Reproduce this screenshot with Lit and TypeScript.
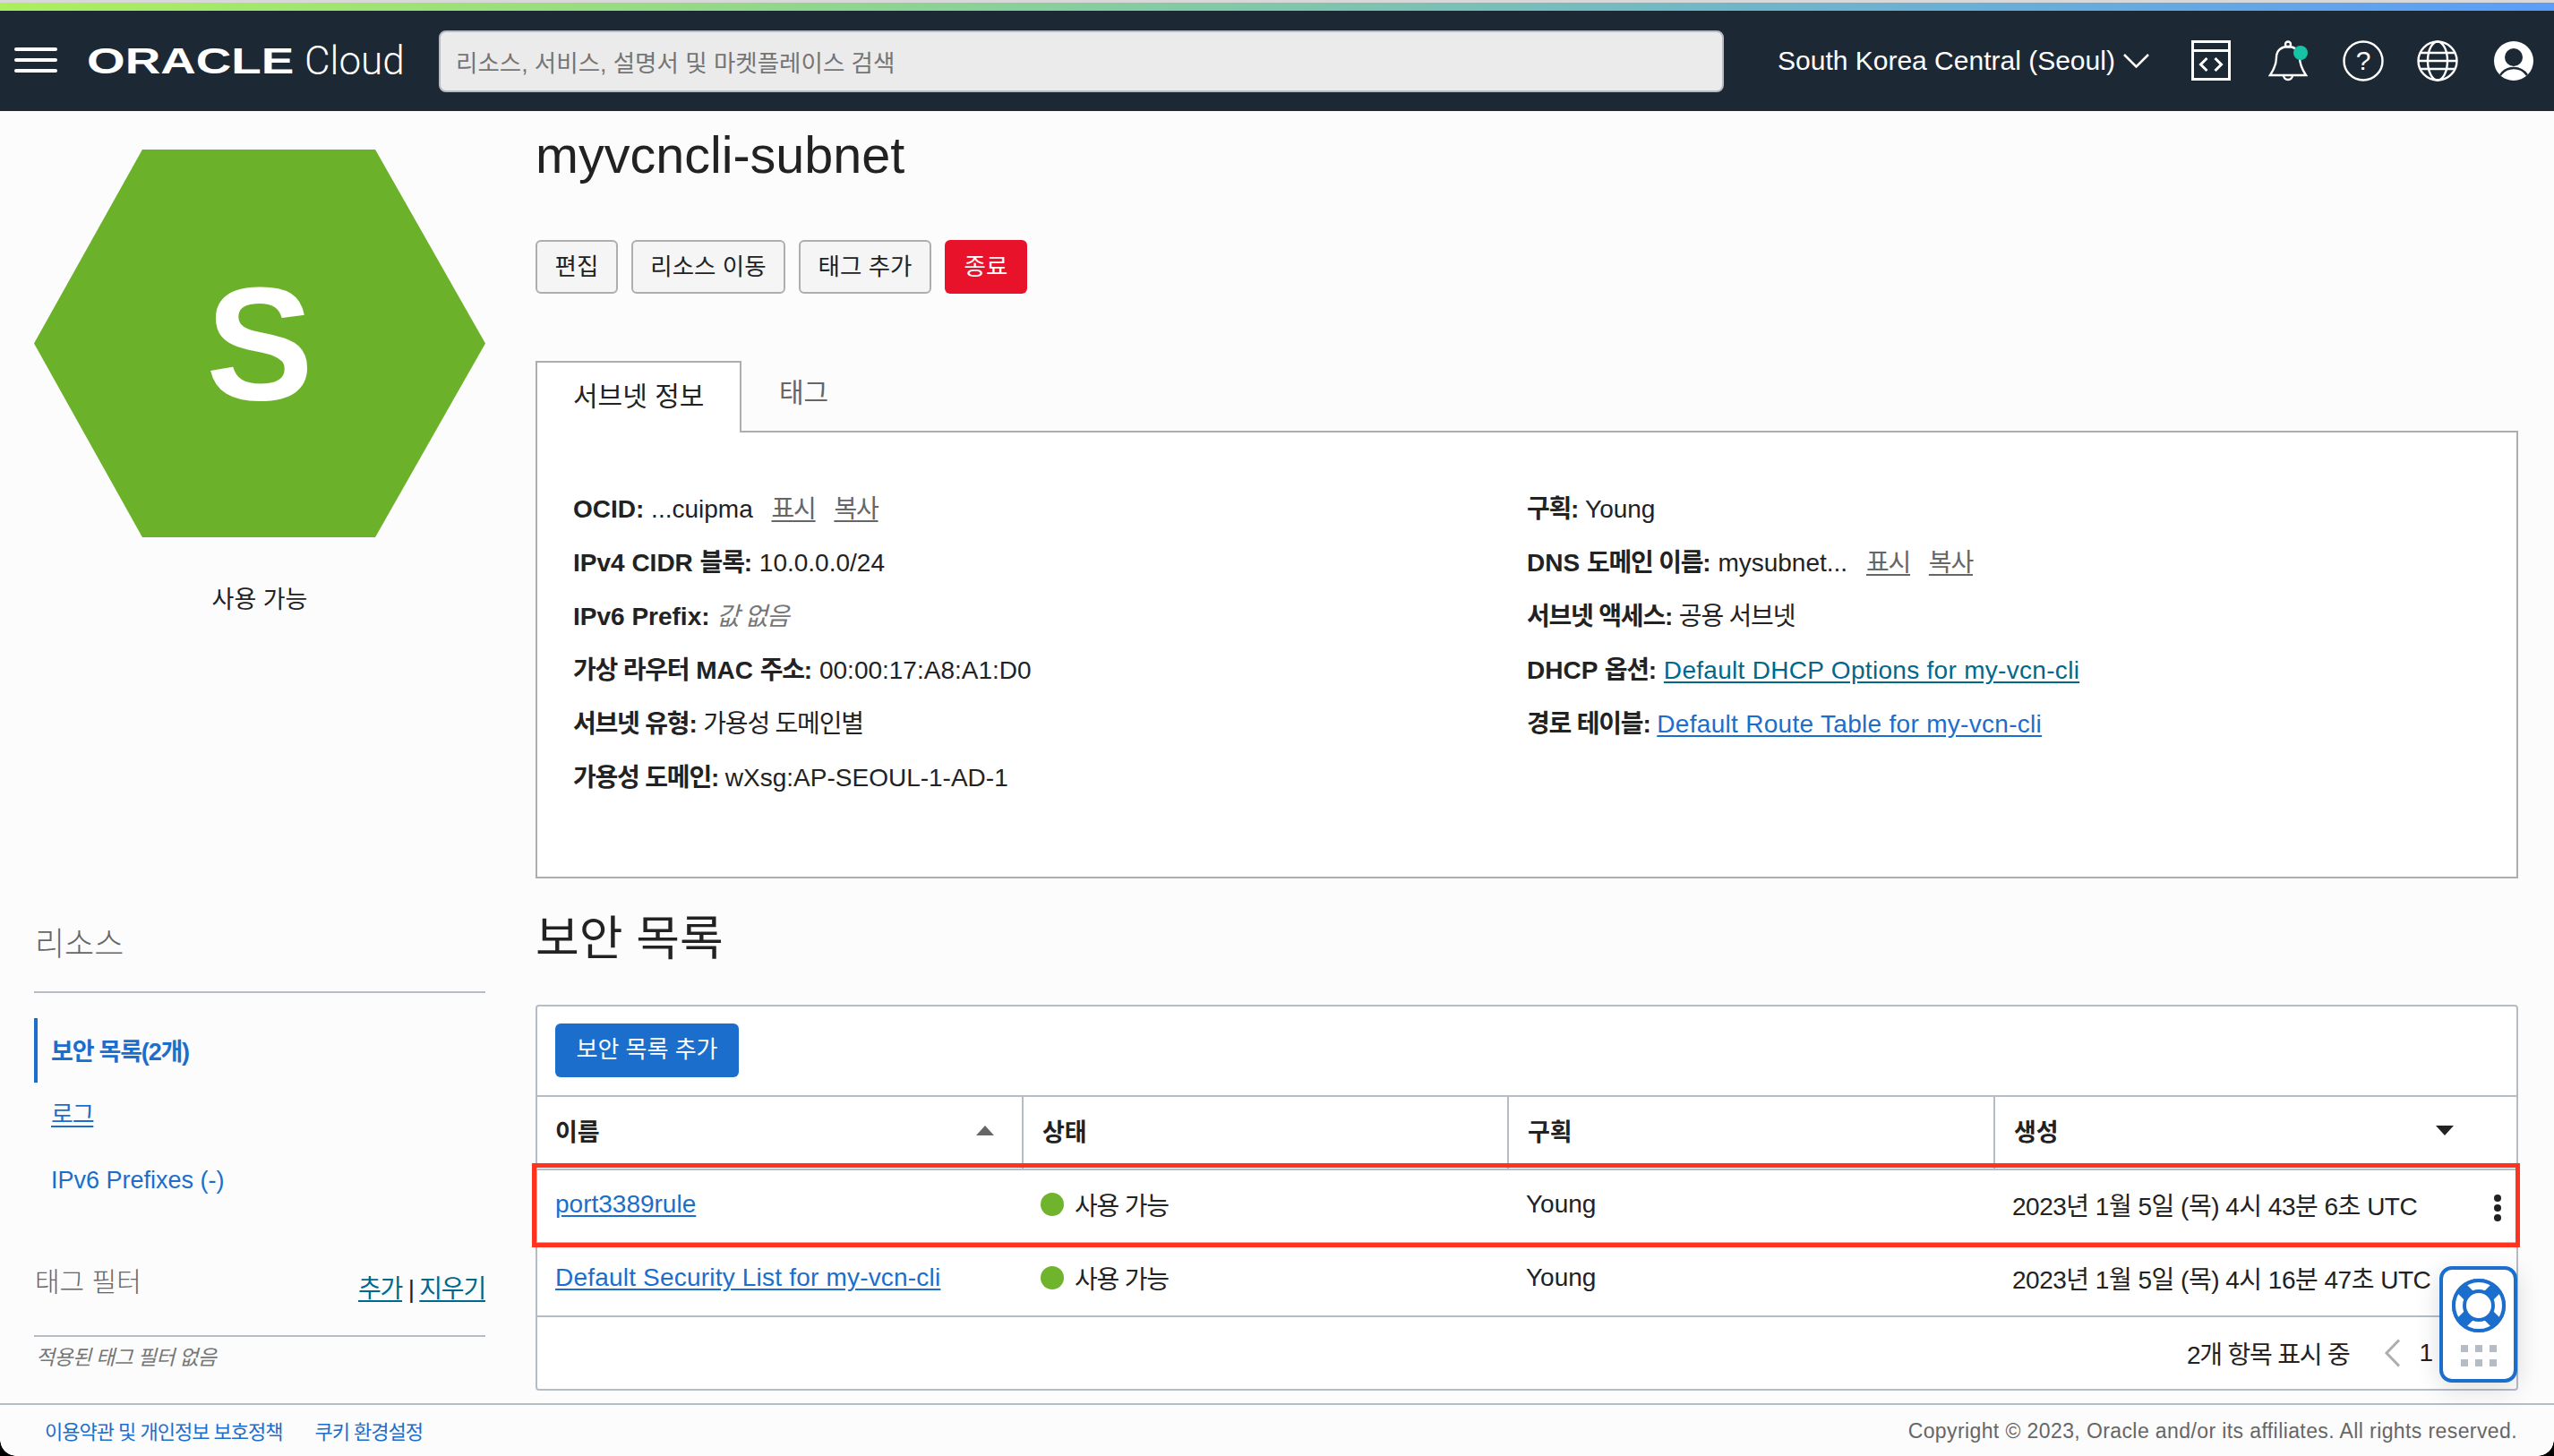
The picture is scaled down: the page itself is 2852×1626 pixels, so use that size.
import { LitElement, html, css, svg } from 'lit';
import { customElement } from 'lit/decorators.js';

const codeIcon = svg`
  <rect x="2.5" y="1.5" width="41" height="42" fill="none" stroke="#fff" stroke-width="3" />
  <line x1="2" y1="11.5" x2="44" y2="11.5" stroke="#fff" stroke-width="3" />
  <path d="M18.5 20l-7 7 7 7M27.5 20l7 7-7 7" fill="none" stroke="#fff" stroke-width="3" />
`;

const bellIcon = svg`
  <g fill="none" stroke="#fff" stroke-width="2.4">
    <circle cx="22" cy="4.5" r="3" />
    <path d="M2 39C8 30 9 24 9 19 9 11 15 7 22 7s13 4 13 12c0 5 1 11 7 20z" />
    <path d="M17 39a5 5 0 0 0 10 0" />
  </g>
  <circle cx="36" cy="14" r="8" fill="#16c3a4" />
`;

const globeIcon = svg`
  <g fill="none" stroke="#fff" stroke-width="2.4">
    <circle cx="23" cy="23" r="21.5" />
    <ellipse cx="23" cy="23" rx="11" ry="21.5" />
    <path d="M3 14h40M1.5 23h43M3 32h40" />
  </g>
`;

const avatarIcon = svg`
  <circle cx="22" cy="22" r="22" fill="#fff" />
  <circle cx="22" cy="18" r="10" fill="#1d2835" />
  <path d="M7 38c4-6 10-8 15-8s11 2 15 8" fill="none" stroke="#1d2835" stroke-width="2.4" />
`;

const buoyIcon = svg`
  <circle cx="30" cy="30" r="30" fill="#1b6ecc" />
  <circle cx="30" cy="30" r="22.5" fill="none" stroke="#fff" stroke-width="9" />
  <path d="M10 10l10 10M50 10L40 20M10 50l10-10M50 50L40 40" stroke="#1b6ecc" stroke-width="14" />
  <circle cx="30" cy="30" r="28" fill="none" stroke="#1b6ecc" stroke-width="4" />
  <circle cx="30" cy="30" r="15.5" fill="#fff" stroke="#1b6ecc" stroke-width="3" />
`;

@customElement('app-root')
export class AppRoot extends LitElement {
  static styles = css`
    :host {
      display: flex;
      flex-direction: column;
      position: relative;
      width: 2852px;
      height: 1626px;
      overflow: hidden;
      background: #fcfcfc;
      color: #222;
      font-family: 'Liberation Sans', 'Noto Sans CJK KR', sans-serif;
      font-size: 28px;
    }
    a {
      color: #1b6ecc;
      text-decoration: underline;
      text-underline-offset: 3px;
    }
    b {
      font-weight: 700;
    }
    /* hangul runs a bit narrower in the original font */
    .ko {
      letter-spacing: -1.2px;
    }

    /* top bar */
    .strip {
      height: 9px;
      border-top: 3px solid #d8d8d8;
      background: linear-gradient(90deg, #acef5c, #88d09a 40%, #70b6c8 68%, #5b9df8);
    }
    .bar {
      display: flex;
      align-items: center;
      height: 112px;
      background: #1d2835;
      color: #fff;
    }
    .burger {
      display: flex;
      flex-direction: column;
      gap: 8px;
      width: 48px;
      margin-left: 16px;
      margin-bottom: 2px;
    }
    .burger i {
      height: 4px;
      border-radius: 2px;
      background: #fff;
    }
    .oracle {
      width: 230px;
      margin-left: 33px;
      font-size: 40px;
      font-weight: 700;
      line-height: 40px;
      transform: scaleX(1.37);
      transform-origin: left center;
      white-space: nowrap;
    }
    .cloud {
      width: 150px;
      margin-left: 13px;
      font-family: Roboto, sans-serif;
      font-size: 44px;
      font-weight: 300;
    }
    .search {
      display: flex;
      align-items: center;
      box-sizing: border-box;
      width: 1435px;
      height: 69px;
      padding-left: 17px;
      border: 2px solid #b6bcc6;
      border-radius: 8px;
      background: #ebebeb;
      color: #757575;
      font-size: 26.5px;
    }
    .region {
      margin-left: 60px;
      font-size: 30px;
      white-space: nowrap;
    }
    .chev {
      margin-left: 9px;
    }
    .bar svg.ic {
      display: block;
      flex: none;
    }
    .code {
      margin-left: 46px;
    }
    .bell {
      margin-left: 41px;
    }
    .help {
      margin-left: 39px;
    }
    .globe {
      margin-left: 37px;
    }
    .avatar {
      margin-left: 40px;
    }

    /* page */
    .body {
      display: flex;
      flex: 1;
      min-height: 0;
    }
    .side {
      box-sizing: border-box;
      width: 504px;
      margin-left: 38px;
    }
    .hex {
      display: flex;
      align-items: center;
      justify-content: center;
      height: 433px;
      margin-top: 43px;
      background: #6cb12a;
      clip-path: polygon(24% 0, 75.6% 0, 100% 50%, 75.6% 100%, 24% 100%, 0 50%);
      color: #fff;
      font-size: 180px;
      font-weight: 700;
    }
    .caption {
      margin-top: 50px;
      margin-bottom: -2px;
      line-height: 40px;
      text-align: center;
      font-size: 27px;
    }
    .side-title {
      margin-top: 342px;
      padding: 0 0 27px 1px;
      border-bottom: 2px solid #b6bcc6;
      color: #666;
      font-size: 36px;
      font-weight: 300;
      line-height: 50px;
    }
    .nav {
      margin-top: 28px;
      font-size: 27px;
    }
    .nav a {
      display: flex;
      align-items: center;
      box-sizing: border-box;
      height: 72px;
      padding-left: 19px;
      padding-bottom: 2px;
    }
    .nav a.on {
      padding-left: 15px;
      border-left: 4px solid #1b6ecc;
      font-weight: 700;
      text-decoration: none;
    }
    .nav a.sub {
      height: 68px;
      margin-bottom: 5px;
    }
    .nav a.plain {
      text-decoration: none;
      padding-bottom: 0;
    }
    .tag-head {
      display: flex;
      justify-content: space-between;
      height: 90px;
      margin-top: 47px;
      border-bottom: 2px solid #b6bcc6;
    }
    .tag-title {
      padding-left: 1px;
      color: #666;
      font-size: 30px;
      font-weight: 300;
      line-height: 62px;
    }
    .tag-links {
      padding-top: 16px;
      line-height: 46px;
      font-size: 28px;
    }
    .tag-links a {
      color: #00688c;
    }
    .no-tags {
      margin-top: 3px;
      padding-left: 2px;
      color: #767676;
      font-size: 23px;
      letter-spacing: -0.7px;
      font-style: italic;
      line-height: 40px;
    }

    .main {
      width: 2214px;
      margin-left: 56px;
    }
    h1 {
      margin: 14px 0 0;
      font-size: 57.5px;
      font-weight: 400;
      line-height: 70px;
    }
    .actions {
      display: flex;
      gap: 15px;
      margin-top: 60px;
    }
    .btn {
      box-sizing: border-box;
      width: 92px;
      height: 60px;
      border: 2px solid #aeaeae;
      border-radius: 6px;
      background: #f5f5f5;
      font-size: 26.5px;
      line-height: 56px;
      text-align: center;
    }
    .btn.move {
      width: 172px;
    }
    .btn.tag {
      width: 148px;
    }
    .btn.danger {
      border: 0;
      background: #e8132b;
      color: #fff;
      line-height: 60px;
    }
    .tabs {
      display: flex;
      height: 78px;
      margin-top: 75px;
      border-bottom: 2px solid #aeaeae;
    }
    .tab {
      box-sizing: border-box;
      width: 230px;
      height: 80px;
      padding-left: 40px;
      border: 2px solid #aeaeae;
      border-bottom: 0;
      background: #fff;
      font-size: 30px;
      line-height: 76px;
    }
    .tab.off {
      width: auto;
      padding-left: 42px;
      border: 0;
      background: none;
      color: #666;
      line-height: 72px;
    }
    .panel {
      display: grid;
      grid-template-columns: 1065px 1fr;
      box-sizing: border-box;
      height: 498px;
      padding: 56px 0 0 40px;
      border: 2px solid #aeaeae;
      border-top: 0;
      background: #fff;
    }
    .info div {
      height: 60px;
      line-height: 60px;
      white-space: nowrap;
    }
    .info a {
      letter-spacing: 0.3px;
    }
    .info a.grey {
      margin-left: 13px;
      color: #666;
      letter-spacing: -1.2px;
    }
    .info a.teal {
      color: #00688c;
    }
    .info em {
      color: #767676;
    }
    h2 {
      margin: 33px 0 0;
      font-size: 53px;
      font-weight: 400;
      line-height: 70px;
    }
    .card {
      position: relative;
      box-sizing: border-box;
      height: 431px;
      margin-top: 38px;
      border: 2px solid #b6bcc6;
      border-radius: 4px;
      background: #fff;
    }
    .toolbar {
      box-sizing: border-box;
      height: 101px;
      padding: 19px 0 0 20px;
      border-bottom: 2px solid #b6bcc6;
    }
    .btn.primary {
      width: 205px;
      border: 0;
      background: #1b6ecc;
      color: #fff;
      font-size: 26px;
      line-height: 58px;
    }
    .row {
      display: grid;
      grid-template-columns: 541px 542px 543px 1fr;
      height: 82px;
      box-sizing: border-box;
      border-bottom: 2px solid #b6bcc6;
    }
    .row > div {
      display: flex;
      align-items: center;
      position: relative;
      padding: 0 0 4px 21px;
      white-space: nowrap;
    }
    .row > div:first-child {
      padding-left: 20px;
    }
    .row.head > div {
      font-weight: 700;
      font-size: 27px;
      padding-bottom: 6px;
    }
    .row.head > div + div {
      border-left: 2px solid #b6bcc6;
    }
    .row .date {
      letter-spacing: -0.5px;
    }
    .row a.long {
      letter-spacing: 0.2px;
    }
    .sort {
      position: absolute;
      width: 0;
      height: 0;
      border-left: 10px solid transparent;
      border-right: 10px solid transparent;
    }
    .sort.up {
      left: 490px;
      border-bottom: 11px solid #666;
    }
    .sort.down {
      left: 492px;
      border-top: 11px solid #222;
    }
    .dot {
      flex: none;
      width: 26px;
      height: 26px;
      margin-right: 12px;
      border-radius: 50%;
      background: #6fb42c;
    }
    .kebab {
      position: absolute;
      left: 559px;
      top: 27px;
      display: flex;
      flex-direction: column;
      gap: 3px;
    }
    .kebab i {
      width: 8px;
      height: 8px;
      border-radius: 50%;
      background: #222;
    }
    .pager {
      display: flex;
      align-items: center;
      height: 80px;
      padding-left: 1842px;
      white-space: nowrap;
    }
    .pager svg {
      margin: 0 20px 0 39px;
    }
    .mark {
      position: absolute;
      left: -6px;
      top: 175px;
      box-sizing: border-box;
      width: 2220px;
      height: 94px;
      border: 5px solid #ff3320;
    }
    .help-tab {
      position: absolute;
      right: -1px;
      bottom: 7px;
      box-sizing: border-box;
      width: 87px;
      height: 130px;
      padding-top: 10px;
      border: 4px solid #1b6ecc;
      border-radius: 14px;
      background: #fff;
      box-shadow: 0 6px 28px rgba(0, 0, 0, 0.14);
    }
    .help-tab svg {
      display: block;
      margin: 0 auto;
    }
    .grip {
      display: grid;
      grid-template-columns: repeat(3, 8px);
      gap: 8px;
      justify-content: center;
      margin-top: 14px;
    }
    .grip i {
      height: 8px;
      background: #b6bcc6;
    }

    /* footer */
    .foot {
      display: flex;
      align-items: center;
      box-sizing: border-box;
      height: 59px;
      padding: 2px 41px 0 50px;
      border-top: 2px solid #b6bcc6;
      font-size: 22px;
    }
    .foot a {
      margin-right: 36px;
      margin-bottom: 3px;
      letter-spacing: -1px;
      text-decoration: none;
    }
    .copy {
      margin-left: auto;
      color: #666;
      font-size: 23px;
      letter-spacing: 0.4px;
    }
    .corner {
      position: absolute;
      bottom: 0;
      width: 18px;
      height: 18px;
    }
    .corner.l {
      left: 0;
      background: radial-gradient(circle at 100% 0, transparent 17.5px, #000 18px);
    }
    .corner.r {
      right: 0;
      background: radial-gradient(circle at 0 0, transparent 17.5px, #000 18px);
    }
  `;

  render() {
    return html`
      <div class="strip"></div>
      <header class="bar">
        <div class="burger"><i></i><i></i><i></i></div>
        <div class="oracle">ORACLE</div>
        <div class="cloud">Cloud</div>
        <div class="search">리소스, 서비스, 설명서 및 마켓플레이스 검색</div>
        <div class="region">South Korea Central (Seoul)</div>
        <svg class="ic chev" width="29" height="16" viewBox="0 0 29 16">
          <path d="M1 1l13.500 13.500L28 1" fill="none" stroke="#fff" stroke-width="2.500" />
        </svg>
        <svg class="ic code" width="46" height="46" viewBox="0 0 46 46">${codeIcon}</svg>
        <svg class="ic bell" width="44" height="46" viewBox="0 0 44 46">${bellIcon}</svg>
        <svg class="ic help" width="46" height="46" viewBox="0 0 46 46">
          <circle cx="23" cy="23" r="21.500" fill="none" stroke="#fff" stroke-width="2.400" />
          <text x="23" y="33" fill="#fff" font-size="30" text-anchor="middle">?</text>
        </svg>
        <svg class="ic globe" width="46" height="46" viewBox="0 0 46 46">${globeIcon}</svg>
        <svg class="ic avatar" width="44" height="44" viewBox="0 0 44 44">${avatarIcon}</svg>
      </header>

      <div class="body">
        <aside class="side">
          <div class="hex">S</div>
          <div class="caption">사용 가능</div>
          <div class="side-title">리소스</div>
          <nav class="nav">
            <a class="on"><span class="ko">보안 목록(2개)</span></a>
            <a class="sub"><span class="ko">로그</span></a>
            <a class="plain">IPv6 Prefixes (-)</a>
          </nav>
          <div class="tag-head">
            <span class="tag-title">태그 필터</span>
            <span class="tag-links ko"><a>추가</a> | <a>지우기</a></span>
          </div>
          <div class="no-tags">적용된 태그 필터 없음</div>
        </aside>

        <main class="main">
          <h1>myvcncli-subnet</h1>
          <div class="actions">
            <div class="btn">편집</div>
            <div class="btn move">리소스 이동</div>
            <div class="btn tag">태그 추가</div>
            <div class="btn danger">종료</div>
          </div>
          <div class="tabs">
            <div class="tab">서브넷 정보</div>
            <div class="tab off">태그</div>
          </div>
          <section class="panel">
            <div class="info">
              <div><b>OCID:</b> ...cuipma <a class="grey">표시</a> <a class="grey">복사</a></div>
              <div><b>IPv4 CIDR <span class="ko">블록</span>:</b> 10.0.0.0/24</div>
              <div><b>IPv6 Prefix:</b> <em class="ko">값 없음</em></div>
              <div><b><span class="ko">가상 라우터</span> MAC <span class="ko">주소</span>:</b> 00:00:17:A8:A1:D0</div>
              <div><b class="ko">서브넷 유형:</b> <span class="ko">가용성 도메인별</span></div>
              <div><b class="ko">가용성 도메인:</b> wXsg:AP-SEOUL-1-AD-1</div>
            </div>
            <div class="info">
              <div><b class="ko">구획:</b> Young</div>
              <div><b>DNS <span class="ko">도메인 이름</span>:</b> mysubnet... <a class="grey">표시</a> <a class="grey">복사</a></div>
              <div><b class="ko">서브넷 액세스:</b> <span class="ko">공용 서브넷</span></div>
              <div><b>DHCP <span class="ko">옵션</span>:</b> <a class="teal">Default DHCP Options for my-vcn-cli</a></div>
              <div><b class="ko">경로 테이블:</b> <a>Default Route Table for my-vcn-cli</a></div>
            </div>
          </section>

          <h2>보안 목록</h2>
          <section class="card">
            <div class="toolbar"><div class="btn primary">보안 목록 추가</div></div>
            <div class="row head">
              <div>이름<span class="sort up"></span></div>
              <div>상태</div>
              <div>구획</div>
              <div>생성<span class="sort down"></span></div>
            </div>
            <div class="row">
              <div><a>port3389rule</a></div>
              <div><span class="dot"></span><span class="ko">사용 가능</span></div>
              <div>Young</div>
              <div>
                <span class="date">2023년 1월 5일 (목) 4시 43분 6초 UTC</span>
                <span class="kebab"><i></i><i></i><i></i></span>
              </div>
            </div>
            <div class="row">
              <div><a class="long">Default Security List for my-vcn-cli</a></div>
              <div><span class="dot"></span><span class="ko">사용 가능</span></div>
              <div>Young</div>
              <div><span class="date">2023년 1월 5일 (목) 4시 16분 47초 UTC</span></div>
            </div>
            <div class="pager">
              <span class="ko">2개 항목 표시 중</span>
              <svg width="19" height="32" viewBox="0 0 19 32">
                <path d="M17 1.500L3 16l14 14.500" fill="none" stroke="#aeaeae" stroke-width="3" />
              </svg>
              1 /
            </div>
            <div class="mark"></div>
            <div class="help-tab">
              <svg width="60" height="60" viewBox="0 0 60 60">${buoyIcon}</svg>
              <div class="grip"><i></i><i></i><i></i><i></i><i></i><i></i></div>
            </div>
          </section>
        </main>
      </div>

      <footer class="foot">
        <a>이용약관 및 개인정보 보호정책</a>
        <a>쿠키 환경설정</a>
        <span class="copy">Copyright © 2023, Oracle and/or its affiliates. All rights reserved.</span>
      </footer>
      <div class="corner l"></div>
      <div class="corner r"></div>
    `;
  }
}
